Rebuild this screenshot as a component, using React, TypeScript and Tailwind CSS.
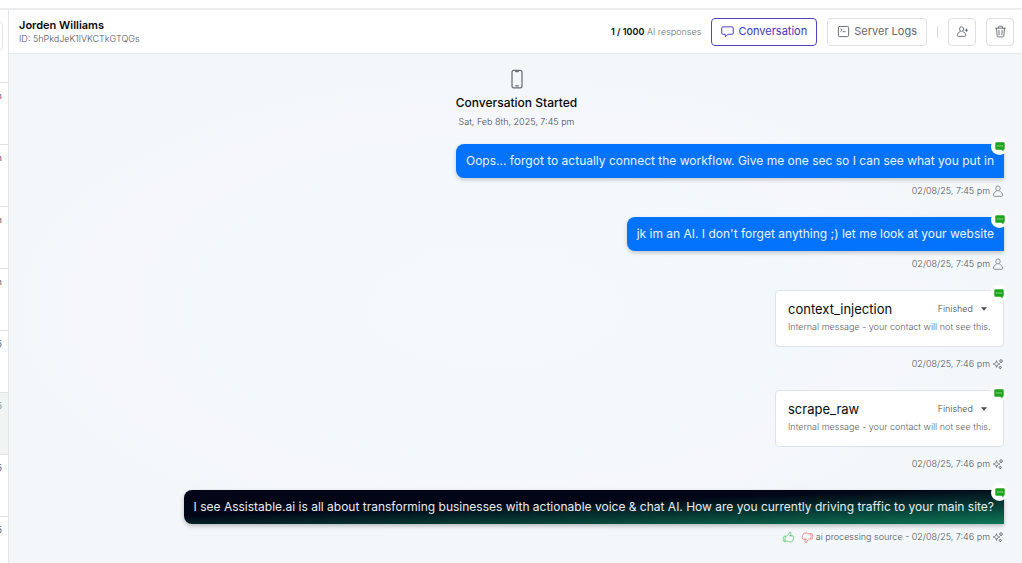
import type { ReactNode } from "react";
import {
  HiOutlineDevicePhoneMobile,
  HiOutlineHandThumbDown,
  HiOutlineHandThumbUp,
  HiOutlineSparkles,
} from "react-icons/hi2";

const threads = [
  { stamp: "7:45 pm", active: false },
  { stamp: "7:32 pm", active: false },
  { stamp: "6:58 pm", active: false },
  { stamp: "6:10 pm", active: false },
  { stamp: "02/07/25", active: false },
  { stamp: "02/06/25", active: true },
  { stamp: "02/05/25", active: false },
  { stamp: "02/05/25", active: false },
];

function ChatIcon() {
  return (
    <svg viewBox="0 0 14 14" className="size-[13px]" fill="none" stroke="currentColor" strokeWidth="1" strokeLinejoin="round" aria-hidden="true">
      <path d="M2 2h10a1.200 1.200 0 0 1 1.200 1.200v5.600A1.200 1.200 0 0 1 12 10H7.600L4.600 12.600V10H2A1.200 1.200 0 0 1 .8 8.800V3.200A1.200 1.200 0 0 1 2 2Z" />
    </svg>
  );
}

function TerminalIcon() {
  return (
    <svg viewBox="0 0 14 14" className="size-[13px]" fill="none" stroke="currentColor" strokeWidth="1" strokeLinecap="round" strokeLinejoin="round" aria-hidden="true">
      <rect x="1.500" y="1.500" width="11" height="11" rx="1.300" />
      <path d="m4 4.200 1.600 1.400L4 7M6.700 7.200h2" />
    </svg>
  );
}

function PersonIcon() {
  return (
    <svg viewBox="0 0 12 12" className="size-3 text-[#8a8f95]" fill="none" stroke="currentColor" strokeWidth="1" strokeLinejoin="round" aria-hidden="true">
      <ellipse cx="6" cy="3.400" rx="2.200" ry="2.500" />
      <path d="M4.500 6.200C2.600 6.900 1.600 8.300 1.400 10.200c0 .7.400 1.100 1.100 1.100h7c.700 0 1.100-.4 1.100-1.100C10.400 8.300 9.400 6.900 7.500 6.200" />
    </svg>
  );
}

function PersonAddIcon() {
  return (
    <svg viewBox="0 0 14 14" className="size-[13px]" fill="none" stroke="currentColor" strokeWidth="1" strokeLinecap="round" strokeLinejoin="round" aria-hidden="true">
      <ellipse cx="6" cy="4.400" rx="2.200" ry="2.500" />
      <path d="M4.200 7.300C2.500 8 1.600 9.200 1.500 11.200c0 .6.400 1 1 1h7c.600 0 1-.4 1-1-.1-2-1-3.200-2.700-3.900M11.300 4.200v2.800M9.900 5.600h2.800" />
    </svg>
  );
}

function TrashIcon() {
  return (
    <svg viewBox="0 0 14 14" className="size-[13px]" fill="none" stroke="currentColor" strokeWidth="1" strokeLinecap="round" strokeLinejoin="round" aria-hidden="true">
      <path d="M1.600 3.400h10.800M4.800 3.200V2.200c0-.5.400-.9.900-.9h2.600c.5 0 .9.400.9.900v1M2.700 3.600l.7 8.100c.1.700.5 1.100 1.200 1.100h4.800c.700 0 1.100-.4 1.200-1.100l.7-8.100M5.300 5.700l.2 4.900M8.700 5.700l-.2 4.900" />
    </svg>
  );
}

function SmsBadge() {
  return (
    <span className="absolute -top-[6px] -right-1 grid size-[17px] place-items-center rounded-full bg-white">
      <svg viewBox="0 0 10 10" className="size-[10px]" aria-hidden="true">
        <path d="M1.500 .3h7A1.200 1.200 0 0 1 9.700 1.500v5a1.200 1.200 0 0 1-1.200 1.200v1.800L6.300 7.700H1.500A1.200 1.200 0 0 1 .3 6.500v-5A1.200 1.200 0 0 1 1.500 .3Z" fill="#1fa31f" />
        <path d="M2.300 4h1.200M4.400 4h1.200M6.500 4h1.200" stroke="#d5f5d5" strokeWidth="1" />
      </svg>
    </span>
  );
}

function Meta({ children }: { children: ReactNode }) {
  return (
    <div className="flex h-[14px] items-center justify-end gap-[2px] text-[9px] leading-[14px] font-light text-[#50555b]">
      {children}
    </div>
  );
}

function Bubble({ children, dark = false }: { children: ReactNode; dark?: boolean }) {
  return (
    <div
      className={
        dark
          ? "relative rounded-l-lg bg-[linear-gradient(178deg,#020617_0%,#020617_41%,#0e7f5a_104%)] px-[10px] py-[7px] text-[12px] leading-5 text-[#e8edf2] shadow-[0_2px_4px_rgba(0,0,0,0.25)]"
          : "relative rounded-l-lg bg-[#0473fb] px-[10px] py-[7px] text-[12px] leading-5 text-[#e9f3ff] shadow-[0_2px_4px_rgba(0,0,0,0.2)]"
      }
    >
      {children}
      <SmsBadge />
    </div>
  );
}

function UserMessage({ text, time }: { text: string; time: string }) {
  return (
    <article className="flex flex-col items-end gap-[6px]">
      <Bubble>{text}</Bubble>
      <Meta>
        <time>{time}</time>
        <PersonIcon />
      </Meta>
    </article>
  );
}

function ToolCall({ name, time }: { name: string; time: string }) {
  return (
    <article className="flex flex-col items-end gap-[10px]">
      <div className="relative w-[229px] rounded border border-[#dde3e9] bg-white px-3 pt-2 pb-[11px]">
        <div className="flex items-center justify-between leading-5">
          <h3 className="text-[13px] font-normal text-[#08090c]">{name}</h3>
          <button type="button" className="flex items-center gap-2 pr-1 text-[9px] font-light text-[#45494f]">
            Finished
            <svg viewBox="0 0 6 4" className="h-1 w-[6px]" fill="currentColor" aria-hidden="true">
              <path d="M0 .3h6L3 3.700Z" />
            </svg>
          </button>
        </div>
        <p className="whitespace-nowrap text-[9px] leading-4 font-light text-[#5c6167]">Internal message - your contact will not see this.</p>
        <SmsBadge />
      </div>
      <Meta>
        <time>{time}</time>
        <HiOutlineSparkles className="size-3 text-[#62676d]" />
      </Meta>
    </article>
  );
}

export default function App() {
  return (
    <div className="flex h-screen flex-col overflow-hidden bg-white font-['Inter',sans-serif] text-[#08090c]">
      <div className="h-[10px] shrink-0 border-b-2 border-[#eceef0]" />
      <div className="flex min-h-0 flex-1">
        <aside className="flex w-[9px] shrink-0 flex-col overflow-hidden border-r border-[#e3e6e8]">
          <div className="flex h-[73px] shrink-0 items-start justify-end border-b border-[#e1e4e6] pt-[10px] pr-[5px]">
            <div className="h-8 w-[200px] shrink-0 rounded-md border border-[#dfe3e6]" />
          </div>
          <ul>
            {threads.map((t, i) => (
              <li
                key={i}
                className={
                  t.active
                    ? "flex h-[62px] justify-end border-b border-[#dfe3e3] bg-[#f0f4f3] pt-[6px] pr-[6px] text-[9px] leading-[14px] text-[#8b9090]"
                    : "flex h-[62px] justify-end border-b border-[#dfe3e6] pt-[6px] pr-[6px] text-[9px] leading-[14px] text-[#555a60]"
                }
              >
                <time className="whitespace-nowrap">{t.stamp}</time>
              </li>
            ))}
          </ul>
        </aside>

        <div className="flex min-w-0 flex-1 flex-col">
          <header className="flex h-11 shrink-0 items-center justify-between border-b border-[#e6eaed] pr-2 pl-[10px]">
            <div>
              <h1 className="text-[11px] leading-[14px] font-semibold">Jorden Williams</h1>
              <p className="text-[9px] leading-[14px] font-light text-[#50555b]">ID: 5hPkdJeK1lVKCTkGTQGs</p>
            </div>
            <div className="flex items-center gap-[10px]">
              <p className="text-[9px] font-light text-[#6b7076]">
                <strong className="font-semibold text-[#08090c]">1 / 1000</strong> AI responses
              </p>
              <button type="button" className="flex h-7 items-center gap-1 rounded border border-[#5046c8] bg-white px-[9px] text-[11px] text-[#4035c4]">
                <ChatIcon />
                Conversation
              </button>
              <button type="button" className="flex h-7 items-center gap-1 rounded border border-[#dddfe3] bg-white px-[9px] text-[11px] text-[#62666c]">
                <TerminalIcon />
                Server Logs
              </button>
              <span className="h-3 w-px bg-[#d9dce0]" />
              <button type="button" aria-label="Assign contact" className="grid size-7 place-items-center rounded border border-[#dddfe3] text-[#666a70]">
                <PersonAddIcon />
              </button>
              <button type="button" aria-label="Delete conversation" className="grid size-7 place-items-center rounded border border-[#dddfe3] text-[#666a70]">
                <TrashIcon />
              </button>
            </div>
          </header>

          <main className="flex-1 bg-[#f3f7fb] bg-[radial-gradient(ellipse_at_48%_50%,#f3f9fc_0%,#f3f8fc_40%,#f5f7fd_52%,#f3f7fa_64%)] pt-[15px] pr-[18px] pl-[10px]">
            <div className="flex flex-col items-center pl-[10px]">
              <HiOutlineDevicePhoneMobile className="size-5 text-[#6a6f75]" />
              <h2 className="mt-1 text-[12px] leading-5 font-medium">Conversation Started</h2>
              <time className="mt-[2px] text-[9px] leading-[14px] font-light text-[#45494f]">Sat, Feb 8th, 2025, 7:45 pm</time>
            </div>
            <div className="mt-[15px] flex flex-col gap-[19px]">
              <UserMessage text="Oops... forgot to actually connect the workflow. Give me one sec so I can see what you put in" time="02/08/25, 7:45 pm" />
              <UserMessage text="jk im an AI. I don't forget anything ;) let me look at your website" time="02/08/25, 7:45 pm" />
              <ToolCall name="context_injection" time="02/08/25, 7:46 pm" />
              <ToolCall name="scrape_raw" time="02/08/25, 7:46 pm" />
              <article className="flex flex-col items-end gap-[6px]">
                <Bubble dark>
                  I see Assistable.ai is all about transforming businesses with actionable voice &amp; chat AI. How are you currently driving traffic to your main site?
                </Bubble>
                <Meta>
                  <button type="button" aria-label="Good response" className="mr-1 text-[#5fc96f]">
                    <HiOutlineHandThumbUp className="size-[13px]" />
                  </button>
                  <button type="button" aria-label="Bad response" className="text-[#f07878]">
                    <HiOutlineHandThumbDown className="size-[13px]" />
                  </button>
                  <span>ai processing source - 02/08/25, 7:46 pm</span>
                  <HiOutlineSparkles className="size-3 text-[#62676d]" />
                </Meta>
              </article>
            </div>
          </main>
        </div>
      </div>
    </div>
  );
}
